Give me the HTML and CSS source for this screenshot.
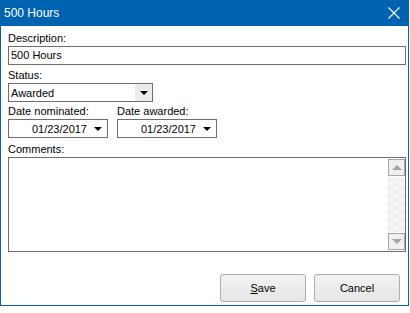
FILE: index.html
```html
<!DOCTYPE html>
<html lang="en">
<head>
    <meta charset="UTF-8">
    <meta name="viewport" content="width=device-width, initial-scale=1.0">
    <title>500 Hours</title>
    <link rel="stylesheet" href="styles.css">
</head>
<body>
    <div class="window">
        <div class="titlebar">
            <span class="title">500 Hours</span>
            <svg class="close" width="12" height="12" viewBox="0 0 12 12">
                <path d="M0.5 0.5 L11.5 11.5 M11.5 0.5 L0.5 11.5" stroke="#ffffff" stroke-width="1.1" fill="none"/>
            </svg>
        </div>
        <div class="content">
            <label class="field-label first">Description:</label>
            <div class="textbox">500 Hours</div>

            <label class="field-label status-label">Status:</label>
            <div class="combo">
                <span class="combo-text">Awarded</span>
                <span class="combo-btn"><span class="arrow"></span></span>
            </div>

            <div class="dates">
                <div class="date-field">
                    <label class="field-label">Date nominated:</label>
                    <div class="datebox">
                        <span class="date-text">01/23/2017</span>
                        <span class="arrow"></span>
                    </div>
                </div>
                <div class="date-field">
                    <label class="field-label">Date awarded:</label>
                    <div class="datebox">
                        <span class="date-text">01/23/2017</span>
                        <span class="arrow"></span>
                    </div>
                </div>
            </div>

            <label class="field-label comments-label">Comments:</label>
            <div class="memo">
                <div class="memo-text"></div>
                <div class="scrollbar">
                    <div class="sb-btn"><span class="sb-up"></span></div>
                    <div class="sb-track"></div>
                    <div class="sb-btn"><span class="sb-down"></span></div>
                </div>
            </div>

            <div class="buttons">
                <button class="btn"><u>S</u>ave</button>
                <button class="btn">Cancel</button>
            </div>
        </div>
    </div>
</body>
</html>
```

FILE: styles.css
```css
body {
    margin: 0;
    padding: 0;
    background-color: #ffffff;
    font-family: "Liberation Sans", Arial, sans-serif;
    font-size: 11px;
    color: #000000;
}

.window {
    width: 407px;
    height: 305px;
    border: 1px solid #0063b1;
    border-top: none;
    display: flex;
    flex-direction: column;
    background-color: #ffffff;
}

.titlebar {
    height: 26px;
    background-color: #0063b1;
    color: #ffffff;
    display: flex;
    align-items: center;
    justify-content: space-between;
    padding: 0 9px 0 4px;
    margin: 0 -1px;
}

    .titlebar .title {
        font-size: 12px;
        padding-bottom: 1px;
    }

    .titlebar .close {
        margin-bottom: 1px;
    }

.content {
    flex: 1;
    display: flex;
    flex-direction: column;
    padding: 0 2px 0 7px;
}

.field-label {
    display: block;
    height: 13px;
    line-height: 13px;
    margin-top: 3px;
    margin-bottom: 1px;
}

    .field-label.first {
        margin-top: 6px;
    }

    .field-label.status-label {
        margin-top: 4px;
    }

    .field-label.comments-label {
        margin-top: 5px;
    }

.textbox {
    height: 17px;
    line-height: 17px;
    border: 1px solid #6e6e6e;
    padding-left: 2px;
    width: 394px;
}

.combo {
    width: 143px;
    height: 17px;
    border: 1px solid #6e6e6e;
    display: flex;
    align-items: center;
    justify-content: space-between;
}

    .combo .combo-text {
        padding-left: 2px;
    }

    .combo .combo-btn {
        width: 17px;
        height: 17px;
        background-color: #ececec;
        display: flex;
        align-items: center;
        justify-content: center;
    }

.arrow {
    width: 0;
    height: 0;
    border-left: 4px solid transparent;
    border-right: 4px solid transparent;
    border-top: 4px solid #000000;
    margin-top: 1px;
}

.dates {
    display: flex;
    gap: 9px;
}

.datebox {
    width: 98px;
    height: 17px;
    border: 1px solid #6e6e6e;
    display: flex;
    align-items: center;
    justify-content: flex-end;
}

    .datebox .date-text {
        margin-right: 7px;
    }

    .datebox .arrow {
        margin-right: 5px;
    }

.memo {
    width: 396px;
    height: 93px;
    border: 1px solid #6e6e6e;
    display: flex;
}

    .memo .memo-text {
        flex: 1;
    }

.scrollbar {
    width: 17px;
    display: flex;
    flex-direction: column;
}

.sb-btn {
    height: 15px;
    margin: 1px 0;
    border: 1px solid #a6a6a6;
    background-color: #f0f0f0;
    display: flex;
    align-items: center;
    justify-content: center;
}

.sb-track {
    flex: 1;
    background-color: #ffffff;
    background-image: repeating-conic-gradient(#e9e9e9 0 25%, #ffffff 0 50%);
    background-size: 2px 2px;
}

.sb-up {
    width: 0;
    height: 0;
    border-left: 5px solid transparent;
    border-right: 5px solid transparent;
    border-bottom: 5px solid #a3a3a3;
}

.sb-down {
    width: 0;
    height: 0;
    border-left: 5px solid transparent;
    border-right: 5px solid transparent;
    border-top: 5px solid #a3a3a3;
}

.buttons {
    display: flex;
    justify-content: flex-end;
    gap: 8px;
    margin-top: 22px;
    padding-right: 6px;
}

.btn {
    width: 86px;
    height: 28px;
    font-family: "Liberation Sans", Arial, sans-serif;
    font-size: 11px;
    color: #000000;
    background: linear-gradient(#f2f2f2, #e6e6e6);
    border: 1px solid #adadad;
    border-radius: 3px;
    padding: 0;
}
```
